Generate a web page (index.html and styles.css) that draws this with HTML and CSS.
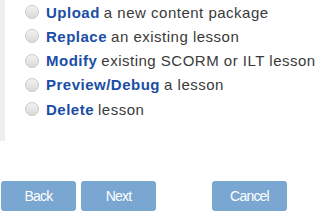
FILE: index.html
```html
<!DOCTYPE html>
<html lang="en">
<head>
    <meta charset="UTF-8">
    <title>Content wizard</title>
    <link rel="stylesheet" href="styles.css">
</head>
<body>
    <div class="options">
        <label class="option"><input type="radio" name="action"><span class="dot"></span><b>Upload</b> a new content package</label>
        <label class="option"><input type="radio" name="action"><span class="dot"></span><b>Replace</b> an existing lesson</label>
        <label class="option"><input type="radio" name="action"><span class="dot"></span><b>Modify</b> existing SCORM or ILT lesson</label>
        <label class="option"><input type="radio" name="action"><span class="dot"></span><b>Preview/Debug</b> a lesson</label>
        <label class="option"><input type="radio" name="action"><span class="dot"></span><b>Delete</b> lesson</label>
    </div>
    <div class="actions">
        <button class="btn">Back</button>
        <button class="btn">Next</button>
        <button class="btn btn-cancel">Cancel</button>
    </div>
</body>
</html>
```

FILE: styles.css
```css
body {
    margin: 0;
    font-family: "Liberation Sans", Arial, sans-serif;
    background: #fff;
}

.options {
    border-left: 5px solid #eeeeee;
    height: 141px;
    padding-left: 20px;
    box-sizing: border-box;
}

.option {
    display: flex;
    align-items: center;
    height: 24.25px;
    font-size: 15px;
    letter-spacing: 0.5px;
    color: #3a3a3a;
    white-space: nowrap;
}

.option input {
    display: none;
}

.dot {
    width: 12px;
    height: 12px;
    border: 1px solid #c8c8c8;
    border-radius: 50%;
    background: linear-gradient(#f4f4f4, #d8d8d8);
    margin-right: 7px;
    flex: none;
}

.option b {
    color: #1a4da6;
    margin-right: 4px;
}

.actions {
    display: flex;
    gap: 5px;
    margin-top: 40px;
    padding-left: 1px;
}

.btn {
    width: 75px;
    height: 30px;
    border: none;
    border-radius: 3px;
    background: #7aa7d1;
    color: #fff;
    font-family: "Liberation Sans", Arial, sans-serif;
    font-size: 14px;
    letter-spacing: -0.8px;
}

.btn-cancel {
    margin-left: 51px;
}
```
